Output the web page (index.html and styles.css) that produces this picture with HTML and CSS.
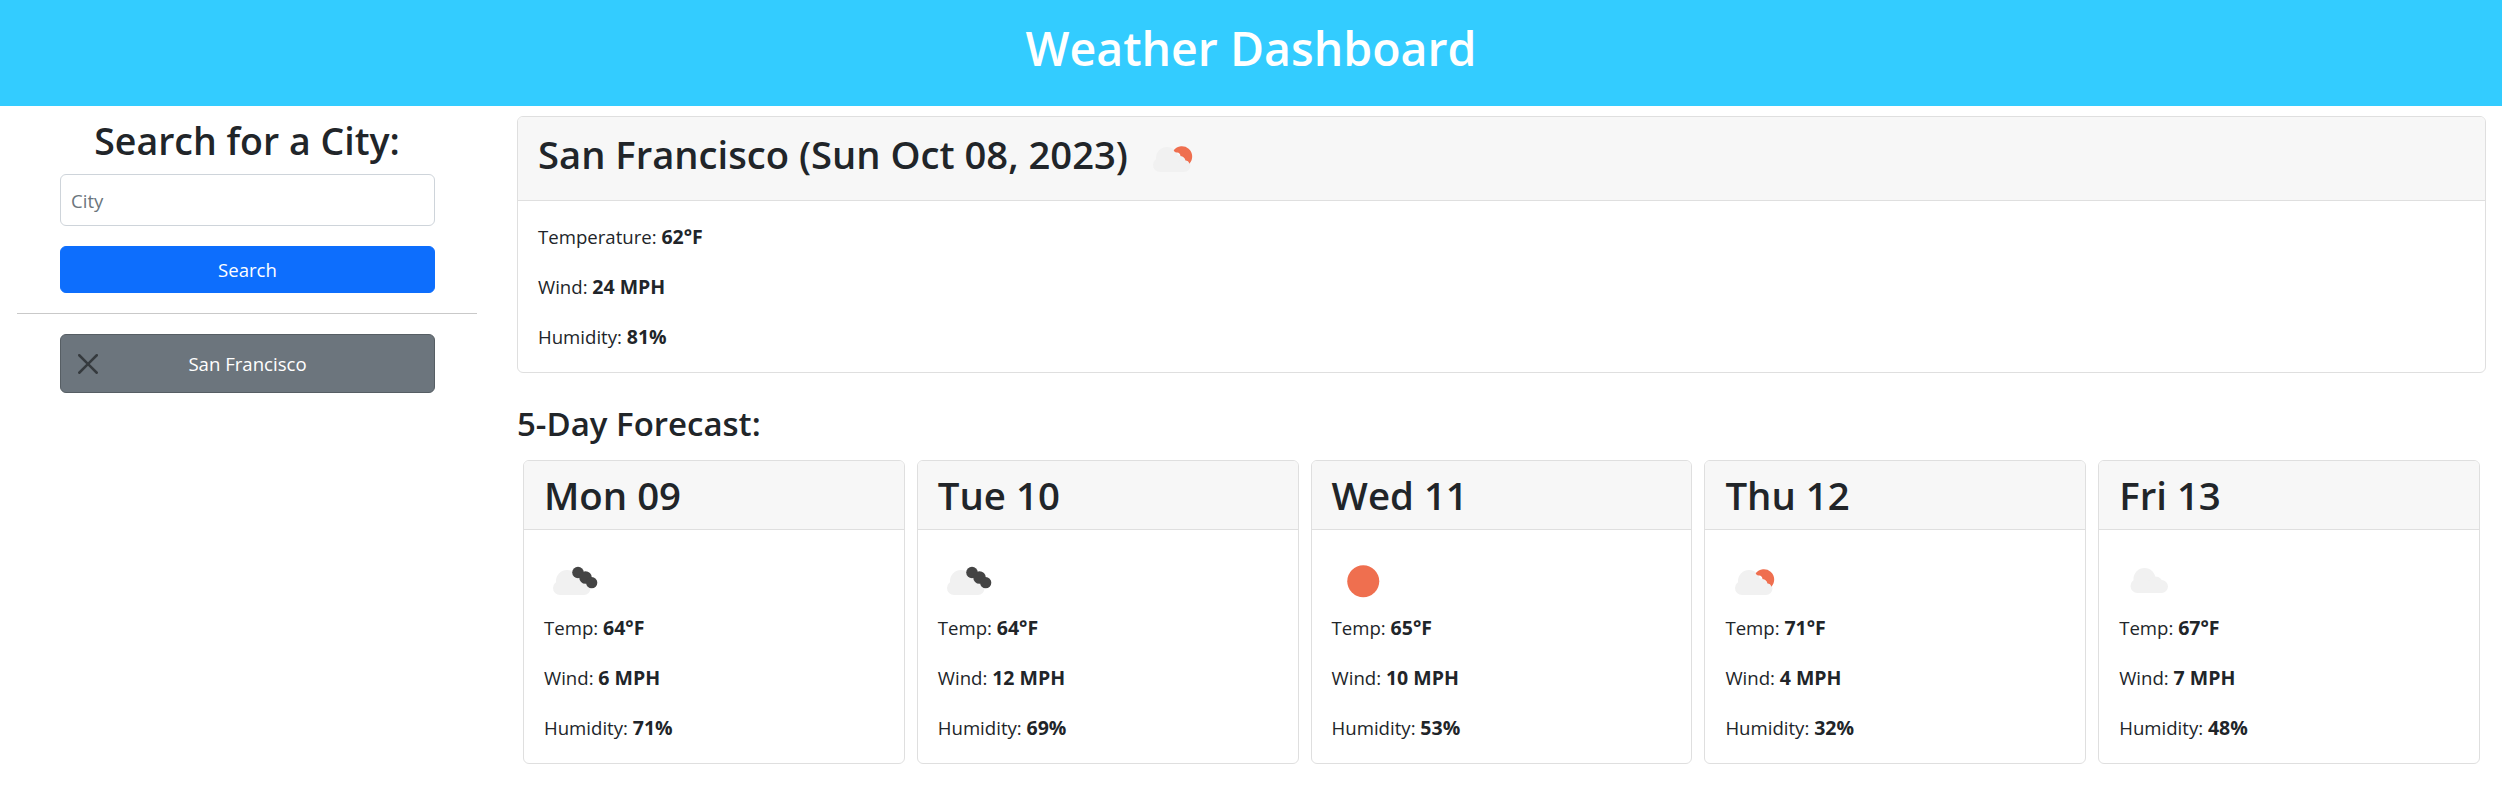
FILE: index.html
```html
<!DOCTYPE html>
<html lang="en">
<head>
    <meta charset="UTF-8">
    <meta name="viewport" content="width=device-width, initial-scale=1.0">
    <title>Weather Dashboard</title>
    <link rel="stylesheet" href="styles.css">
</head>
<body>
    <svg class="icon-defs" width="0" height="0">
        <symbol id="cloud" viewBox="0 0 62.5 62.5">
            <g fill="#f1f1f1">
                <circle cx="16" cy="38" r="7"/>
                <circle cx="23" cy="31" r="11"/>
                <circle cx="34" cy="36" r="7.5"/>
                <circle cx="40" cy="38.5" r="6.5"/>
                <rect x="16" y="36" width="24" height="9"/>
            </g>
        </symbol>
        <symbol id="sun-part" viewBox="0 0 62.5 62.5">
            <path fill="#ef6f4f" d="M30.7 23.3A10.3 10.3 0 1 1 46.3 36.7Q45.5 33.5 42.5 33.5Q41.5 29.5 37.5 29Q37 25 33.5 25.5Q31.5 25.5 30.7 23.3Z"/>
        </symbol>
        <symbol id="dark-cloud" viewBox="0 0 62.5 62.5">
            <g fill="#444">
                <circle cx="34" cy="22.5" r="5.8"/>
                <circle cx="41.5" cy="27.5" r="6.3"/>
                <circle cx="47.7" cy="32.7" r="5.6"/>
            </g>
        </symbol>
        <symbol id="sun" viewBox="0 0 62.5 62.5">
            <circle cx="31.25" cy="31.25" r="16" fill="#ef6f4f"/>
        </symbol>
    </svg>

    <header class="top-bar">
        <h1>Weather Dashboard</h1>
    </header>

    <div class="page">
        <aside class="sidebar">
            <h2>Search for a City:</h2>
            <form class="search-form">
                <input class="city-input" type="text" placeholder="City">
                <button class="btn btn-blue" type="button">Search</button>
            </form>
            <hr class="divider">
            <div class="history">
                <button class="btn btn-gray" type="button">
                    <svg class="close-icon" viewBox="0 0 16 16"><path d="M.293.293a1 1 0 0 1 1.414 0L8 6.586 14.293.293a1 1 0 1 1 1.414 1.414L9.414 8l6.293 6.293a1 1 0 0 1-1.414 1.414L8 9.414l-6.293 6.293a1 1 0 0 1-1.414-1.414L6.586 8 .293 1.707a1 1 0 0 1 0-1.414z"/></svg>
                    <span>San Francisco</span>
                </button>
            </div>
        </aside>

        <main class="content">
            <section class="card">
                <div class="card-header today-header">
                    <h2>San Francisco (Sun Oct 08, 2023)</h2>
                    <svg class="weather-icon"><use href="#cloud" x="1"/><use href="#sun-part"/></svg>
                </div>
                <div class="card-body">
                    <p>Temperature: <b>62°F</b></p>
                    <p>Wind: <b>24 MPH</b></p>
                    <p>Humidity: <b>81%</b></p>
                </div>
            </section>

            <h3 class="forecast-title">5-Day Forecast:</h3>

            <div class="forecast-row">
                <section class="card day-card">
                    <div class="card-header"><h2>Mon 09</h2></div>
                    <div class="card-body">
                        <svg class="weather-icon"><use href="#cloud"/><use href="#dark-cloud"/></svg>
                        <p>Temp: <b>64°F</b></p>
                        <p>Wind: <b>6 MPH</b></p>
                        <p>Humidity: <b>71%</b></p>
                    </div>
                </section>
                <section class="card day-card">
                    <div class="card-header"><h2>Tue 10</h2></div>
                    <div class="card-body">
                        <svg class="weather-icon"><use href="#cloud"/><use href="#dark-cloud"/></svg>
                        <p>Temp: <b>64°F</b></p>
                        <p>Wind: <b>12 MPH</b></p>
                        <p>Humidity: <b>69%</b></p>
                    </div>
                </section>
                <section class="card day-card">
                    <div class="card-header"><h2>Wed 11</h2></div>
                    <div class="card-body">
                        <svg class="weather-icon"><use href="#sun"/></svg>
                        <p>Temp: <b>65°F</b></p>
                        <p>Wind: <b>10 MPH</b></p>
                        <p>Humidity: <b>53%</b></p>
                    </div>
                </section>
                <section class="card day-card">
                    <div class="card-header"><h2>Thu 12</h2></div>
                    <div class="card-body">
                        <svg class="weather-icon"><use href="#cloud" x="1"/><use href="#sun-part"/></svg>
                        <p>Temp: <b>71°F</b></p>
                        <p>Wind: <b>4 MPH</b></p>
                        <p>Humidity: <b>32%</b></p>
                    </div>
                </section>
                <section class="card day-card">
                    <div class="card-header"><h2>Fri 13</h2></div>
                    <div class="card-body">
                        <svg class="weather-icon"><use href="#cloud" x="2.5" y="-2"/></svg>
                        <p>Temp: <b>67°F</b></p>
                        <p>Wind: <b>7 MPH</b></p>
                        <p>Humidity: <b>48%</b></p>
                    </div>
                </section>
            </div>
        </main>
    </div>
</body>
</html>
```

FILE: styles.css
```css
* {
    margin: 0;
    padding: 0;
    box-sizing: border-box;
}

body {
    font-family: "Open Sans", Arial, sans-serif;
    font-size: 18.6px;
    line-height: 30px;
    color: #212529;
    background: #ffffff;
    overflow: hidden;
}

.icon-defs {
    position: absolute;
}

.top-bar {
    height: 106px;
    padding-bottom: 10px;
    background: #33ccff;
    display: flex;
    align-items: center;
    justify-content: center;
}

.top-bar h1 {
    font-size: 46.5px;
    line-height: 60px;
    font-weight: 600;
    color: #ffffff;
}

.page {
    display: flex;
    align-items: flex-start;
}

/* sidebar */
.sidebar {
    width: 517px;
    flex-shrink: 0;
    padding: 11px 40px 0 17px;
}

.sidebar h2 {
    font-size: 37.5px;
    line-height: 48px;
    font-weight: 600;
    text-align: center;
    margin-bottom: 9px;
}

.search-form, .history {
    margin: 0 42px 0 43px;
}

.city-input {
    display: block;
    width: 100%;
    height: 52px;
    margin-bottom: 20px;
    padding: 0 10px;
    font: inherit;
    color: #212529;
    border: 1.5px solid #ced4da;
    border-radius: 6px;
}

.city-input::placeholder {
    color: #6c757d;
    opacity: 1;
}

.btn {
    display: block;
    width: 100%;
    font: inherit;
    color: #ffffff;
    border-radius: 6px;
    cursor: pointer;
}

.btn-blue {
    height: 47px;
    background: #0d6efd;
    border: 1px solid #0d6efd;
}

.btn-gray {
    height: 59px;
    background: #6c757d;
    border: 1px solid #565e64;
    display: grid;
    grid-template-columns: 1fr auto 1fr;
    align-items: center;
    padding: 0 17px;
}

.close-icon {
    width: 20px;
    height: 20px;
    fill: #000000;
    opacity: 0.5;
}

.divider {
    border: none;
    border-top: 1.5px solid #c9c9c9;
    margin: 19.5px 0 20.5px;
}

/* cards */
.content {
    flex: 1;
    min-width: 0;
    padding: 10px 16px 0 0;
}

.card {
    background: #ffffff;
    border: 1.25px solid #dfdfdf;
    border-radius: 6px;
    overflow: hidden;
}

.card-header {
    background: #f7f7f7;
    border-bottom: 1.25px solid #dfdfdf;
    padding: 10px 20px;
}

.card-header h2 {
    font-size: 38.4px;
    line-height: 48px;
    font-weight: 600;
}

.today-header {
    display: flex;
    align-items: center;
    gap: 15px;
}

.today-header h2 {
    font-size: 38.2px;
    padding-bottom: 8px;
}

.card-body {
    padding: 21px 20px 0;
}

.card-body p {
    margin-bottom: 20px;
}

.card-body b {
    font-size: 19.5px;
    font-weight: 700;
}

.weather-icon {
    display: block;
    width: 62.5px;
    height: 62.5px;
}

.weather-icon use {
    width: 62.5px;
    height: 62.5px;
}

.forecast-title {
    font-size: 33px;
    line-height: 42px;
    font-weight: 600;
    margin: 30px 0 15px;
}

.forecast-row {
    display: flex;
    gap: 12px;
    padding: 0 6px;
}

.day-card {
    flex: 1;
    min-width: 0;
}

.day-card .card-body {
    padding-top: 20px;
}

.day-card .weather-icon {
    margin-bottom: 1px;
}
```
